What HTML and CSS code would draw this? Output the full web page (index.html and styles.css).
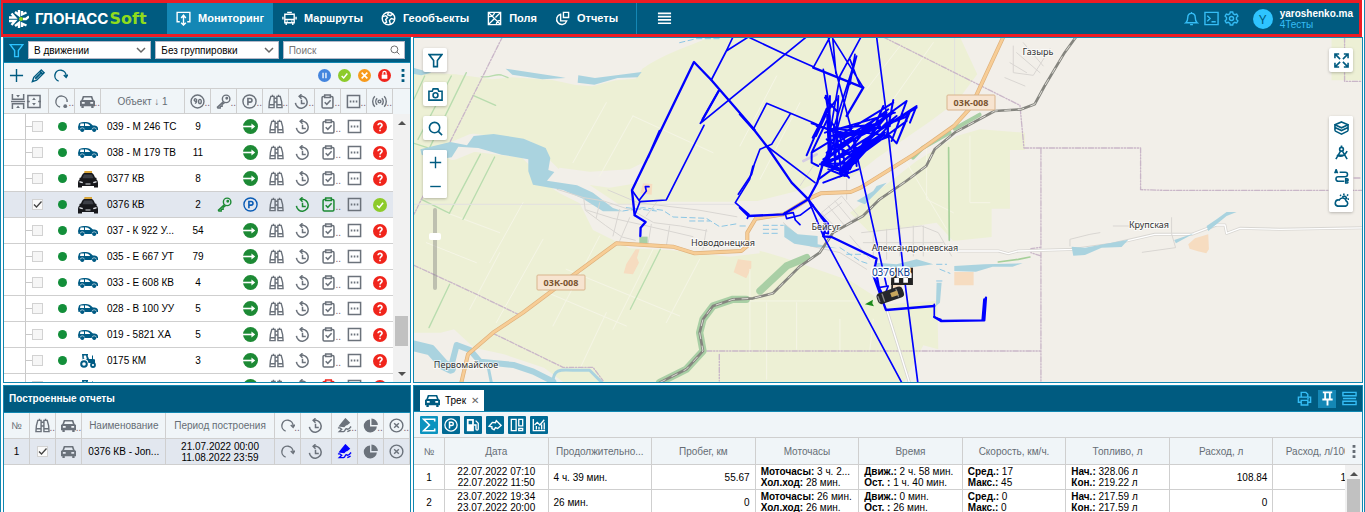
FILE: index.html
```html
<!DOCTYPE html>
<html lang="ru">
<head>
    <meta charset="UTF-8">
    <meta name="viewport" content="width=device-width, initial-scale=1.0">
    <title>ГЛОНАССSoft - Мониторинг</title>
    <link rel="stylesheet" href="styles.css">
</head>
<body>
    <svg class="sprite" aria-hidden="true">
        <symbol id="i-monitor" viewBox="0 0 16 16"><path d="M4 11.500H1.200v-10h13.600v10H12M8 4.500v9M5.500 7.500 8 4.500l2.500 3M5.500 12.500 8 15l2.500-2.500"/></symbol>
        <symbol id="i-bus" viewBox="0 0 16 16"><path d="M3 3.500h10v9H3zM5.500 1.500h5M3 9h10M1 6v3M15 6v3M4.500 13v2M11.500 13v2M5 11h1M10 11h1"/></symbol>
        <symbol id="i-globe" viewBox="0 0 16 16"><circle cx="8" cy="8" r="6.700"/><path d="M2 6l3-1 2 2-2 2 1 3-2 1M8 1.500 7 4l3 1 3-2M14 9l-3-1-2 2 1 4"/></symbol>
        <symbol id="i-field" viewBox="0 0 16 16"><path d="M1.500 1.500h13v13h-13zM2 2l12 12M14 2 9 7M2 14l6-6M2 6c3 0 5-1 6-4M10 14c0-2 2-4 4-4"/></symbol>
        <symbol id="i-report" viewBox="0 0 16 16"><path d="M9 1.500h5.500v5.500H9zM6 3.500a5.500 5.500 0 1 0 6.500 7H6z"/></symbol>
        <symbol id="i-menu" viewBox="0 0 16 16"><path stroke-width="1.700" d="M1 2.500h14M1 6h14M1 9.500h14M1 13h14"/></symbol>
        <symbol id="i-bell" viewBox="0 0 16 16"><path d="M2 12.500h12c-2-1.500-2-3-2-5.500 0-2.500-1.500-4.500-4-4.500S4 4.500 4 7c0 2.500 0 4-2 5.500zM6.500 14.500h3M8 1v1"/></symbol>
        <symbol id="i-term" viewBox="0 0 16 16"><path d="M1 1.500h14v13H1zM3.500 5l3 3-3 3M8 11.500h4.500"/></symbol>
        <symbol id="i-gear" viewBox="0 0 16 16"><circle cx="8" cy="8" r="2.200"/><path d="M6.700 1h2.600l.5 2 1.700.9 2-.7 1.300 2.300-1.500 1.500v2l1.500 1.500-1.300 2.300-2-.7-1.700.9-.5 2H6.700l-.5-2-1.700-.9-2 .7-1.300-2.300L2.700 9V7L1.200 5.500l1.300-2.300 2 .7L6.200 3z"/></symbol>
        <symbol id="i-funnel" viewBox="0 0 16 16"><path d="M1.200 1.700h13.600L10 8v6.500H6V8z"/></symbol>
        <symbol id="i-plus" viewBox="0 0 16 16"><path d="M8 1v14M1 8h14"/></symbol>
        <symbol id="i-minus" viewBox="0 0 16 16"><path d="M1.500 8h13"/></symbol>
        <symbol id="i-pencil" viewBox="0 0 16 16"><path d="M1.500 14.500 3 10 11 2l3 3-8 8z"/><path stroke-width="2" d="M9.500 3.500l3 3M4.500 11.500l6-6"/></symbol>
        <symbol id="i-refresh" viewBox="0 0 16 16"><path d="M6 14A6 6 0 1 1 14 8.500M11.500 7.500 14 10l1.800-2.800"/></symbol>
        <symbol id="i-expand" viewBox="0 0 32 16"><path stroke-width="1.600" d="M1.500 0v5.500h12V0M1.500 16v-5.500h12V16M0 8h15M18 1.500h13v13H18zM17 8h3M29 8h3"/><path fill="currentColor" stroke="none" d="M5.500 1h4l-2 2.700zM5.500 15h4l-2-2.700zM22.500 6.500h4l-2-2.700zM22.500 9.500h4l-2 2.700z"/></symbol>
        <symbol id="i-state" viewBox="0 0 16 16"><path d="M6.500 14A6 6 0 1 1 14 8.500"/><circle cx="12" cy="13" r="2" fill="currentColor" stroke="none"/></symbol>
        <symbol id="i-car" viewBox="0 0 16 16"><path fill="currentColor" stroke="none" fill-rule="evenodd" d="M3 2h10l1.500 4.500L16 7.500V13h-1.500v2H12v-2H4v2H1.500v-2H0V7.500l1.500-1zM4.300 3.600 3.300 6.500h9.400l-1-2.900zM2 8.500v2h3v-2zM11 8.500v2h3v-2z"/></symbol>
        <symbol id="i-speed" viewBox="0 0 16 16"><circle cx="8" cy="8" r="6.900"/><path d="M7 7a1.300 1.300 0 1 0-2 .5 1.300 1.300 0 0 0 2-.5v1.500L5.500 10.300M9.200 8a1.400 2.300 0 1 1 2.800 0 1.400 2.300 0 1 1-2.800 0"/></symbol>
        <symbol id="i-key" viewBox="0 0 16 16"><circle cx="10.800" cy="5.200" r="4"/><circle cx="11.500" cy="4.500" r=".8"/><path d="M8 8l-6.500 6 .5 1h2.500v-2h2v-2L9 9.500"/></symbol>
        <symbol id="i-park" viewBox="0 0 16 16"><circle cx="8" cy="8" r="7"/><path stroke-width="1.700" d="M6.300 12V4.800h2.400a1.900 1.900 0 0 1 0 3.900H6.300"/></symbol>
        <symbol id="i-go" viewBox="0 0 16 16"><circle cx="8" cy="8" r="8" fill="currentColor" stroke="none"/><path stroke="#fff" stroke-width="1.700" d="M0 8h11"/><path fill="#fff" stroke="none" d="M9 4.800 13 8l-4 3.200z"/></symbol>
        <symbol id="i-bino" viewBox="0 0 16 16"><path d="M3 2.500h3.500v12h-5.500L1.500 8zM13 2.500H9.500v12h5.500L14.500 8zM6.500 4.500h3M6.500 8.500h3M1.300 11.500h5M9.700 11.500h5M4 1.500h1.500M10.500 1.500H12"/></symbol>
        <symbol id="i-clock" viewBox="0 0 16 16"><path stroke-width="1.600" d="M1.500 9.500a6.300 6.300 0 1 0 6-7M5.500 2.500h4M8 .3 5.500 2.500 8 5M8 6v4h3.500"/></symbol>
        <symbol id="i-clip" viewBox="0 0 16 16"><path stroke-width="1.600" d="M5 2.700H3.500a1.300 1.300 0 0 0-1.300 1.300v9.700a1.300 1.300 0 0 0 1.300 1.300h9a1.300 1.300 0 0 0 1.300-1.300V4a1.300 1.300 0 0 0-1.300-1.300H11M5 1h6v2.800H5zM5 8.700 7.300 11l4-4.300"/></symbol>
        <symbol id="i-dots" viewBox="0 0 16 16"><path stroke-width="1.600" d="M1.500 1.500h13v13h-13z"/><path stroke-width="2" d="M4 8h1.700M7.200 8h1.700M10.400 8h1.700"/></symbol>
        <symbol id="i-signal" viewBox="0 0 16 16"><circle cx="8" cy="8" r="1.500"/><path d="M5.500 4.500c-2 2-2 5 0 7M10.500 4.500c2 2 2 5 0 7M3 2.500c-3 3-3 8 0 11M13 2.500c3 3 3 8 0 11"/></symbol>
        <symbol id="i-quest" viewBox="0 0 16 16"><circle cx="8" cy="8" r="8" fill="#f0251c" stroke="none"/><path stroke="#fff" stroke-width="1.900" d="M5.800 6c0-3 4.600-2.800 4.500 0 0 1.700-2.200 1.700-2.200 3.700M8 11.200v1.700"/></symbol>
        <symbol id="i-ok" viewBox="0 0 16 16"><circle cx="8" cy="8" r="8" fill="#8dcb2b" stroke="none"/><path stroke="#fff" stroke-width="1.800" d="M4.500 8.500 7 11l4.500-5.500"/></symbol>
        <symbol id="i-pause" viewBox="0 0 16 16"><circle cx="8" cy="8" r="8" fill="#4385de" stroke="none"/><path stroke="#fff" stroke-width="1.600" d="M6.200 4.500v7M9.800 4.500v7"/></symbol>
        <symbol id="i-tools" viewBox="0 0 16 16"><circle cx="8" cy="8" r="8" fill="#f79a1c" stroke="none"/><path stroke="#fff" stroke-width="1.900" d="M4.500 4.500l7 7M11.500 4.500l-7 7"/></symbol>
        <symbol id="i-lock" viewBox="0 0 16 16"><circle cx="8" cy="8" r="8" fill="#f0251c" stroke="none"/><path fill="#fff" stroke="none" d="M4.500 7h7v5h-7z"/><path stroke="#fff" d="M6 7V5a2 2 0 0 1 4 0v2"/></symbol>
        <symbol id="i-kebab" viewBox="0 0 4 16"><path fill="currentColor" stroke="none" d="M.5 1h3v3h-3zM.5 6.500h3v3h-3zM.5 12h3v3h-3z"/></symbol>
        <symbol id="i-search" viewBox="0 0 16 16"><circle cx="7" cy="7" r="5.500"/><path d="M11 11l4 4"/></symbol>
        <symbol id="i-camera" viewBox="0 0 16 16"><path d="M1 4.500h3.500L5.500 2h5l1 2.500H15v9.500H1z"/><circle cx="8" cy="8.800" r="2.600"/></symbol>
        <symbol id="i-full" viewBox="0 0 16 16"><path d="M1 5.500V1h4.500M1 1l5.500 5.500M10.500 1H15v4.500M15 1 9.500 6.500M1 10.500V15h4.500M1 15l5.500-5.500M15 10.500V15h-4.500M15 15 9.500 9.500"/></symbol>
        <symbol id="i-layers" viewBox="0 0 16 16"><path d="M8 1l7 3-7 3.200L1 4zM1 7l7 3.200L15 7M1 10.500 8 14l7-3.500M1 4v6.500M15 4v6.500"/></symbol>
        <symbol id="i-compass" viewBox="0 0 16 16"><circle cx="8" cy="4.500" r="2"/><path d="M8 .5v2M7 6.500 2 15M9 6.500l5 8.500M3 11c4 2 8 1 11-4.500M5 11h6"/></symbol>
        <symbol id="i-route" viewBox="0 0 16 16"><path d="M6 3.500h6a2.400 2.400 0 0 1 0 4.800H4.500a2.400 2.400 0 0 0 0 4.800H11M.8 4.500 2.300.7l1.500 3.800M1.300 3.300h2M12.500 10.500v4.500h1.500a1.200 1.200 0 0 0 0-2.300 1.100 1.100 0 0 0 0-2.200zM12.500 12.700h1.500"/></symbol>
        <symbol id="i-weather" viewBox="0 0 16 16"><path d="M4 14h8.500a3 3 0 0 0 .5-5.500 4 4 0 0 0-7.500-1A3.300 3.300 0 0 0 4 14zM9 4.500c1-2 4.500-1.500 4.500 2M10.500 2V.5M14 3l1-1.500M14.500 6.500H16M7.500 3l-1-1"/></symbol>
        <symbol id="i-pen" viewBox="0 0 16 16"><path fill="currentColor" d="M3 8.500 6 4.500l3 3-1.500 1.500zM7 3.500 9 1l4 4-2.500 2z"/><path d="M1 10.500h2l2 1.500-2.500 2.500H7c2.500-.5 1-3 3-3s1 2.500 5-2.500M11 14.500l3.500-1.500"/></symbol>
        <symbol id="i-pie" viewBox="0 0 16 16"><path fill="currentColor" stroke="none" d="M7.500 1.500a7 7 0 1 0 7.300 7.500H7.500zM9 .5V7.500h6.800A7 7 0 0 0 9 .5z"/></symbol>
        <symbol id="i-close" viewBox="0 0 16 16"><circle cx="8" cy="8" r="6.800"/><path d="M5.500 5.500l5 5M10.500 5.500l-5 5"/></symbol>
        <symbol id="i-sum" viewBox="0 0 16 16"><path stroke-width="1.800" d="M14.500 4V1.500H2L8.500 8 2 14.500h12.500V12"/></symbol>
        <symbol id="i-fuel" viewBox="0 0 16 16"><path fill="currentColor" fill-rule="evenodd" stroke="none" d="M1 1h8v14H1zM3 3v4h4V3z"/><path d="M11 3l3 3v6.500a1.300 1.300 0 0 1-2.600 0V8H9"/></symbol>
        <symbol id="i-zone" viewBox="0 0 16 16"><path stroke-width="1.600" d="M1.300 9.500 5 5l3.500.5L9.500 3l5.500 5.500-4 3.500-2.500-1L7 13.500 4.500 12v-2z"/></symbol>
        <symbol id="i-board" viewBox="0 0 16 16"><path d="M1.500 1.500H7v13H1.500zM10 1.500h4.500V9H10zM10 12h4.500v2.500H10z"/></symbol>
        <symbol id="i-chart" viewBox="0 0 16 16"><path d="M1.500 1v13.500H15M3 8l3-3 3 3 5-6M5 13V9M8 13v-3M11 13V7.500M14 13V5"/></symbol>
        <symbol id="i-print" viewBox="0 0 16 16"><path d="M4.500 6V1.500h5l2 2V6M4.500 12H1.500V6.500h13V12h-3M4.500 10h7v5h-7zM11 8.300h1.500"/></symbol>
        <symbol id="i-pin" viewBox="0 0 16 16"><path stroke-width="2" d="M3 1.500h10M5.500 2v6M10.500 2v6M2.500 9h11M8 9v6.500"/></symbol>
        <symbol id="i-rows" viewBox="0 0 16 16"><path d="M1 1.500h14v3.500H1zM1 8h14M1 11h14v3.500H1z"/></symbol>
        <symbol id="i-side" viewBox="0 0 20 10"><path fill="#005b84" d="M0 5 1 1.500C2 .3 5 0 8 0c2.500 0 4.500 1 6.500 3.200 3 .3 5.500 1 5.500 3V8h-1.500A2.500 2.500 0 0 1 14 8H6.500A2.500 2.500 0 0 1 2 8H.5z"/><circle cx="4.300" cy="8" r="1.900" fill="#005b84"/><circle cx="16.200" cy="8" r="1.900" fill="#005b84"/><path fill="#fff" d="M2.500 1.500H6V4H2zM7 1.300c2 0 3.500.7 5 2.300V4H7z"/><path stroke="#fff" stroke-width=".6" d="M2 7.500a2.400 2.400 0 0 1 4.600 0M13.900 7.500a2.400 2.400 0 0 1 4.600 0"/></symbol>
        <symbol id="i-taxi" viewBox="0 0 20 18"><path fill="#d9a63a" d="M6.500 1h7.500v2.500H6z"/><path fill="#17181c" d="M6 3h8c1.500.5 2.200 2.500 3 4.500 2 0 2 1.300 1 1.500 1.500 1 2 2.500 2 4.500v4h-4V16H4v1.500H0v-4C0 11.500.5 10 2 9c-1-.2-1-1.500 1-1.500.8-2 1.500-4 3-4.500z"/><path fill="#3c3f46" d="M6 4.500h8l1.500 3.700h-11z"/><path fill="#dfe2e6" d="M1.500 11l3.500 1-.5 1.200-3-.6zM18.500 11 15 12l.5 1.200 3-.6zM7.500 13.500h5v1h-5z"/></symbol>
        <symbol id="i-tractor" viewBox="0 0 16 14"><path fill="#005b84" fill-rule="evenodd" d="M2 0h6v1.500H7.500L9 5h3V1.500h1V5l2 .5V9H8.500A4.200 4.200 0 0 0 1 6.500L2.500 5zM3.800 1.500V5h3L6 1.500z"/><circle cx="4" cy="10" r="2.800" fill="none" stroke="#005b84" stroke-width="2"/><circle cx="13" cy="11" r="2" fill="none" stroke="#005b84" stroke-width="1.800"/></symbol>
    </svg>

    <header class="topbar">
        <div class="brand">
            <svg class="brand-mark" viewBox="0 0 20 20"><path fill="none" stroke="#fff" stroke-width="2.400" d="M10 1v5l-4-3M0 8.500h6L2.500 4.500M0 12h6l-3.500 4M10 19v-5l-4 3M13 2v3.500l4.500-2M13 18v-3.500l4.500 2M14 10h3l3-2.500"/><circle cx="12" cy="10" r="2" fill="#8fdc1c"/></svg>
            <span class="brand-name">ГЛОНАСС</span><span class="brand-soft">Soft</span>
        </div>
        <nav class="menu">
            <a href="#" class="active"><svg class="icon"><use href="#i-monitor"/></svg>Мониторинг</a>
            <a href="#"><svg class="icon"><use href="#i-bus"/></svg>Маршруты</a>
            <a href="#"><svg class="icon"><use href="#i-globe"/></svg>Геообъекты</a>
            <a href="#"><svg class="icon"><use href="#i-field"/></svg>Поля</a>
            <a href="#"><svg class="icon"><use href="#i-report"/></svg>Отчеты</a>
        </nav>
        <button class="burger" aria-label="Меню"><svg class="icon"><use href="#i-menu"/></svg></button>
        <div class="user">
            <button aria-label="Уведомления"><svg class="icon"><use href="#i-bell"/></svg></button>
            <button aria-label="Консоль"><svg class="icon"><use href="#i-term"/></svg></button>
            <button aria-label="Настройки"><svg class="icon"><use href="#i-gear"/></svg></button>
            <span class="avatar">Y</span>
            <div class="user-name"><b>yaroshenko.ma</b><span>4Тесты</span></div>
        </div>
    </header>

    <main class="workspace">
        <section class="panel objects">
            <div class="filters">
                <svg class="icon"><use href="#i-funnel"/></svg>
                <select aria-label="Состояние"><option>В движении</option></select>
                <select aria-label="Группировка"><option>Без группировки</option></select>
                <div class="search"><input type="text" placeholder="Поиск" aria-label="Поиск"><svg class="icon"><use href="#i-search"/></svg></div>
            </div>
            <div class="tools">
                <button aria-label="Добавить"><svg class="icon"><use href="#i-plus"/></svg></button>
                <button aria-label="Изменить"><svg class="icon"><use href="#i-pencil"/></svg></button>
                <button aria-label="Обновить"><svg class="icon"><use href="#i-refresh"/></svg></button>
                <span class="spacer"></span>
                <button aria-label="Пауза"><svg class="icon badge"><use href="#i-pause"/></svg></button>
                <button aria-label="Активные"><svg class="icon badge"><use href="#i-ok"/></svg></button>
                <button aria-label="Сервис"><svg class="icon badge"><use href="#i-tools"/></svg></button>
                <button aria-label="Блокировка"><svg class="icon badge"><use href="#i-lock"/></svg></button>
                <button class="kebab" aria-label="Ещё"><svg class="icon"><use href="#i-kebab"/></svg></button>
            </div>
            <div class="grid-wrap">
                <table class="objects-table">
                    <colgroup><col class="c-tree-line"><col class="c-tree"><col><col><col class="c-name"><col span="8"></colgroup>
                    <thead>
                        <tr>
                            <th colspan="2"><svg class="icon wide"><use href="#i-expand"/></svg></th>
                            <th class="cut"><svg class="icon"><use href="#i-state"/></svg></th>
                            <th class="cut"><svg class="icon"><use href="#i-car"/></svg></th>
                            <th>Объект ↓ 1</th>
                            <th class="cut"><svg class="icon"><use href="#i-speed"/></svg></th>
                            <th class="cut"><svg class="icon"><use href="#i-key"/></svg></th>
                            <th class="cut"><svg class="icon"><use href="#i-park"/></svg></th>
                            <th class="cut"><svg class="icon"><use href="#i-bino"/></svg></th>
                            <th class="cut"><svg class="icon"><use href="#i-clock"/></svg></th>
                            <th class="cut"><svg class="icon"><use href="#i-clip"/></svg></th>
                            <th class="cut"><svg class="icon"><use href="#i-dots"/></svg></th>
                            <th class="cut"><svg class="icon"><use href="#i-signal"/></svg></th>
                        </tr>
                    </thead>
                    <tbody id="objectRows"></tbody>
                </table>
                <div class="scrollbar"><i class="up"></i><i class="thumb"></i><i class="down"></i></div>
            </div>
        </section>

        <section class="panel map">
            <svg class="map-canvas" viewBox="0 0 948 344" preserveAspectRatio="xMidYMid slice">
                <rect width="948" height="344" fill="#edf0d5"/>
                <!-- drawn in 3x units, west part first -->
                <g transform="scale(.3333) translate(-3 -6)" fill="none" stroke-linejoin="round" stroke-linecap="round">
                    <g>
                        <path fill="#f2efe9" d="M3 3h890c-60 25-140 50-205 95l-20 30-60 5-70 18-50-4-70-15-120-8-60 6-110-15L3 108z"/>
                        <path stroke="#f2efe9" stroke-width="54" d="M120 345l60-25 160 20 60 60 40 40"/>
                        <path fill="#f2efe9" d="M400 440l40-45 90 12 120-7 40-20-10 60-90 15-60-8 90 60 120-10 300 0 0 155-90 10-180-20-120-5-110-55-40-80-60-30zM3 890l80 0 40-10 60 55 90 20 120 40 60 45H3z"/>
                        <path stroke="#f5f5e6" stroke-width="3" d="M480 380 580 200M560 420 660 240M600 880l120-240M420 870 560 600M250 860l140-250M330 500 230 680M100 530l160 60M40 620l150 60M460 700l340 140M660 240l240 110M760 860l100-190M500 1000l80-170M170 820 260 650M380 760l260 110"/>
                        <path stroke="#b8dcae" stroke-width="4" d="M3 190 35 120M15 310l100-190M50 335l110-225M180 178l68 30M3 322l40 13M110 530l92-175M150 550l95-187M25 490l85 42M48 875l62-130M205 122c30 5 40-10 60-5l20 8M652 820l90-180"/>
                        <path stroke="#c9b6c8" stroke-width="4" stroke-dasharray="14 5 4 5" d="M268 3 180 180 90 360 3 535M3 688l190 88 120 58M240 892l210 102h90l30 40"/>
                        <path stroke="#e2e0e0" stroke-width="3" d="M3 505h2850M1625 3v1035M2317 3v1035"/>
                        <path fill="#aad3df" d="M278 98l160 24 20 4-70 4-90-14zM496 118l50 8 140-18-12 16-60 2-70 20-50-6zM3 96l52 14-30 8-22-4zM22 340l90-22 50 10 20-28 60-6 90 14 66 28 14 30-6 36 18 6-22 26 90 14 48 22 60 46 30 10-60 0-60-38-60-26-90-16-14-40 0-36-80-14-70-20-60-4-20 32-50 8-40-16z"/>
                        <path stroke="#aad3df" stroke-width="32" d="M3 930l50 12 40 45 20 10"/>
                        <path stroke="#aad3df" stroke-width="18" d="M113 997l18-70 40 15 30 35 100 10 60 20 60 30"/>
                        <path stroke="#aad3df" stroke-width="9" d="M420 1040c0-40 20-40 60-37h50l40 40M225 990l10 50"/>
                        <path stroke="#8cc6e4" stroke-width="3" stroke-dasharray="16 10" d="M800 20 850 8 920 8M630 525l60-10 60 8 30 20 100 4 40 25 60-10M640 515l90 10M830 555h60"/>
                        <path stroke="#d9d6d2" stroke-width="3" d="M432 460l80 25 60 10 90 30 60 35 80 10 80 15M512 485l5 38 60 45 50 35 40 10M560 500l-10 45M620 520l-20 80M520 522l80 25 90 20 150 35M650 545l-30 70M715 565l-10 60M770 570l-10 60M585 462l90 38 180 22 160 28M880 580l-10 60M730 500l-30 40"/>
                        <path fill="#f6dcc0" d="M668 640l12 0-8 25 6 15-18 35-28-3 8-28zM975 670l40 5 0 20-15 32-38-18zM690 442l28 2-2 32-34-4z"/>
                        <path fill="#a9cfa5" d="M679 602h25v24h-25z"/>
                    </g>
                    <g transform="translate(981 0)">
                        <path fill="#f2efe9" d="M660 3h1210v1040H490l60-115 45 12-3-145-150 10-110-70-200-70-140-40 0-130 60 0 120-30 70-30 90-10 30-20 50-40 160-110 80-60 60-80z"/>
                        <path fill="#edf0d5" d="M530 375l120-75 70-20 135 10v52h-45v176h-55v85l-115 12-50-55-200 30-60-60zM1775 3h90v130h-90z"/>
                        <path stroke="#f5f5e6" stroke-width="3" d="M0 330 110 120M60 430 180 200M460 190 580 20M380 160 480 30M30 950V700M170 800v140M300 850v100M400 850l-10 90M80 800v230M0 795h500M560 330v160l80 40M690 300v200h60M500 380l120 200"/>
                        <path stroke="#a6d09a" stroke-width="5" d="M626 335l2 278M775 678l60-8 35-7"/>
                        <path stroke="#c9b6c8" stroke-width="4" stroke-dasharray="16 5 4 5 4 5" d="M430 3l410 205 12 128h350v125l70 2h594M903 338v700M0 945h900M903 660l-30-10v-12l30-4M1814 3v133h50M1860 426h-40M-100 945h100M-62 955v80"/>
                        <path stroke="#d9d6d2" stroke-width="3" d="M245 530l60-50 50 60-60 40zM265 510l50 60M285 495l50 60M225 560l80-60M365 590l180-20 50 20 40 70M370 620h240M400 580v90M440 580v90M480 570v90M520 570v90M550 570v90M180 450l40-60 40-10M320 490l0-60M330 600l60 70M130 560l80 70 90 20 80 50M820 30v80l60 8 50-80M830 50l70 60M850 20l60 70M795 125l60 25M810 80l50 30"/>
                        <path stroke="#d8d6d2" stroke-width="9" d="M655 645h120l30 8 30-8 170-5 110-15 130-30h110l75-28h25l5 25 40-15 120 3 270-5v118h50M440 820l70 225"/>
                        <path stroke="#fff" stroke-width="4" d="M655 645h120l30 8 30-8 170-5 110-15 130-30h110l75-28h25l5 25 40-15 120 3 270-5v118h50M440 820l70 225"/>
                        <path stroke="#d9d6d2" stroke-width="3" d="M990 630v-20l60-15 30-5M1120 570h70M1295 545v48l12 42-100 14"/>
                        <path fill="#aad3df" d="M133 565l40 30 60 5 0 25 60 12-70-4-60-10-30-20zM350 495l50-30 10-15 30-10-25 25-40 40zM410 680l60 5 60-15 50 15-60 8-60 15-50-10zM643 690l90-5 115-3-30 10-60 0-50 15-65-2zM995 632l40 3 55-10 75-14-20 22-60 2-50 22-35 2zM1303 612l60-20-55 30zM1400 570l30-20 30-22 30 0-30 12-55 45zM590 740l15 0-5 60-12 10z"/>
                        <path stroke="#8cc6e4" stroke-width="3" stroke-dasharray="16 10" d="M0 570h20M70 568h60M70 580h50M70 592h50M300 635l60 40 30 10M320 655h60M590 685h30M600 700l30 12M590 735h20"/>
                        <path fill="#f6dcc0" d="M643 708h58v40h-58zM1345 625l20-18 40-12 2 45-8 12-25-6-25-8zM455 740h30v30h-30z"/>
                        <path stroke="#d5cde2" stroke-width="8" d="M190 375l40-20"/>
                    </g>
                    <path stroke="#a9cfa5" stroke-width="22" d="M740 1040l80-40 50-55-10-55 10-40 30-40 60-20h40M1041 765l80-75 60-25"/>
                    <path stroke="#a9cfa5" stroke-width="12" d="M1500 365l30-30 80-45M1625 278l75-42"/>
                    <path stroke="#85857f" stroke-width="8" d="M740 1040l80-40 50-55-10-55 10-40 30-40 60-20 60-3 60-15 80-80 60-42 40-60 90-50 50-50 80-55 60-45 25-50 60-50 120-65 80-5 40-15 30-55 60-100 40-55"/>
                    <path stroke="#dedcd6" stroke-width="3" stroke-dasharray="20 20" stroke-linecap="butt" d="M740 1040l80-40 50-55-10-55 10-40 30-40 60-20 60-3 60-15 80-80 60-42 40-60 90-50 50-50 80-55 60-45 25-50 60-50 120-65 80-5 40-15 30-55 60-100 40-55"/>
                    <path stroke="#deb07a" stroke-width="12" d="M145 1040l20-85 75-65 90-60 100-75 180-133 170 10 65 20 140-7 18-15v-40l25-42 85-13 75-47 35-16 90-4 30-13 160-100 120-85 50-55L1771 3"/>
                    <path stroke="#f7cd96" stroke-width="8" d="M145 1040l20-85 75-65 90-60 100-75 180-133 170 10 65 20 140-7 18-15v-40l25-42 85-13 75-47 35-16 90-4 30-13 160-100 120-85 50-55L1771 3"/>
                    <!-- track -->
                    <g stroke="#0000ff" stroke-width="5">
                        <path d="M960 3l-20 42-45 87M940 45l66-42M862 262l55-97M873 268l-113 224-79 5-16 41M681 497l-24-34M708 452h-11l3 13-19 25M862 262 1180 3M1020 390l-10 40-43 70 41 35-5 12"/>
                        <path stroke-width="7" d="M895 132l-52-54-186 385 8 75 33 20-15 17-1 25M895 132l130 150M917 165l-48 85M740 285l-35 80"/>
                        <g transform="translate(981 0)">
                            <path d="M25 3l110 52 85 37M270 3l-50 92M265 3l25 112 40 150 110 485M278 3l10 110M410 3l25 197 55 500 44 343M280 10l90 145M250 100l18 110M362 5l-62 115-30 170M350 60l-85 320M345 55l-15 90M330 70l30 80M340 90l-60 190M40 280l40-78 140 58 80 38M150 235l-55 90-35 15-17 45-8 30-40 60M80 330l145 110M130 535l30-5 6 22 14 14M135 530l5 18 40-10 40-30M205 490l45 110 237 443M225 518l40 45v30l-20-5M415 755l30-5-8 20M583 805v38l20 8"/>
                            <path stroke-width="7" d="M220 95l150 60-50 85M0 235l45 50 35 45 75 110 50 50 55 75-10 36 25 2 135 65-10 50 38 104 145-12M583 843l20 12 130-2 5-68M728 850l5-60M205 490l27-50 18-60M205 490l-75 45-105 5-25-25M258 180l10 60 0 100M405 690l12 65 15 30"/>
                            <path stroke-width="6" d="M215 350l245-150M215 262l90 30M200 358l60-140M245 380l255-185M245 390l285-175M260 385l270-175-20 50M280 400l180-150M250 380l200-80M255 290l210-60M270 300l180-30M280 350l165-130M300 410l140-170M230 270l80 20M265 380l5-200M285 390l10-210M305 420l-15-130M320 420l25-90M240 385l110-5 20-60M250 440l105-40M235 430l110-80 90-60M275 260l80 110M350 390l-5-80M265 400l50 20M300 300l20 115M260 350l140-85M300 280l150 20 20 22 40-95M455 315l45-120M440 300l20-108M330 400l40-80 100-80M345 380l110-120 50-20M260 310l80 50 100-100M215 350l45-95M218 305l42-80M228 300l42-90M215 350v30l20 10M370 350l130-95 0-20M380 330l50-120M470 322l30-75M255 185l35 40M260 230l30-40M310 410l-10 12M310 405l17 20M280 290l5 90M270 280l140-15 50-35M300 330l120-60M290 320l150-90M250 370l170-110M330 340l60-75M290 370l130-70"/>
                            <path stroke-width="13" d="M265 240l5 100-15 45 55 20 35-30 25-35 60-45M285 300l80-10M310 395l40-40"/>
                        </g>
                    </g>
                    <path fill="#1c8a1c" d="M1356 805l24-14-2 11 5 9z"/>
                    <path stroke="#222" stroke-width="5" d="M1437 765l3-65"/>
                    <path fill="#222" d="M1436 695h64v52h-66z"/>
                    <path fill="#fff" d="M1444 726h14v14h-14zM1471 726h14v14h-14zM1458 712h13v14h-13zM1485 712h11v14h-11z"/>
                    <g transform="translate(1432 778) rotate(-19)"><rect x="-41" y="-17" width="82" height="34" rx="12" fill="#25272a"/><path stroke="#888" stroke-width="4" d="M-22-11v22M22-11v22M-36-8v16"/><path fill="#c8a75c" d="M2-7h22v14H2z"/></g>
                </g>
                <g class="shields"><rect x="123" y="237" width="48" height="15" rx="1"/><rect x="533" y="57" width="48" height="15" rx="1"/><text x="147" y="248">03К-008</text><text x="557" y="68">03К-008</text></g>
                <g class="places">
                    <text x="309" y="208">Новодонецкая</text>
                    <text x="412" y="192">Бейсуг</text>
                    <text x="501" y="213">Александроневская</text>
                    <text x="624" y="17">Газырь</text>
                    <text x="735" y="190">Крупская</text>
                    <text x="52" y="330">Первомайское</text>
                </g>
                <text class="unit" x="477" y="238">0376 КВ</text>
            </svg>
            <div class="map-left">
                <button aria-label="Фильтр"><svg class="icon"><use href="#i-funnel"/></svg></button>
                <button aria-label="Снимок"><svg class="icon"><use href="#i-camera"/></svg></button>
                <button aria-label="Найти"><svg class="icon"><use href="#i-search"/></svg></button>
                <div class="stack">
                    <button aria-label="Приблизить"><svg class="icon thin"><use href="#i-plus"/></svg></button>
                    <button aria-label="Отдалить"><svg class="icon thin"><use href="#i-minus"/></svg></button>
                </div>
                <input class="zoom" type="range" min="0" max="18" value="12" aria-label="Масштаб">
            </div>
            <div class="map-right">
                <button aria-label="На весь экран"><svg class="icon"><use href="#i-full"/></svg></button>
                <div class="stack">
                    <button aria-label="Слои"><svg class="icon"><use href="#i-layers"/></svg></button>
                    <button aria-label="Измерения"><svg class="icon"><use href="#i-compass"/></svg></button>
                    <button aria-label="Маршрут"><svg class="icon"><use href="#i-route"/></svg></button>
                    <button aria-label="Погода"><svg class="icon"><use href="#i-weather"/></svg></button>
                </div>
            </div>
        </section>

        <section class="panel reports">
            <h2>Построенные отчеты</h2>
            <table class="reports-table">
                <colgroup><col><col><col><col class="c-title"><col class="c-period"><col><col class="c-clock"><col><col><col></colgroup>
                <thead>
                    <tr>
                        <th>№</th>
                        <th class="cut"><svg class="icon"><use href="#i-bino"/></svg></th>
                        <th class="cut"><svg class="icon"><use href="#i-car"/></svg></th>
                        <th>Наименование</th>
                        <th>Период построения</th>
                        <th class="cut"><svg class="icon"><use href="#i-refresh"/></svg></th>
                        <th><svg class="icon"><use href="#i-clock"/></svg></th>
                        <th class="cut"><svg class="icon"><use href="#i-pen"/></svg></th>
                        <th class="cut"><svg class="icon"><use href="#i-pie"/></svg></th>
                        <th class="cut"><svg class="icon"><use href="#i-close"/></svg></th>
                    </tr>
                </thead>
                <tbody>
                    <tr>
                        <td>1</td>
                        <td><input type="checkbox" checked aria-label="Показать"></td>
                        <td><svg class="icon"><use href="#i-car"/></svg></td>
                        <td>0376 КВ - Jon...</td>
                        <td>21.07.2022 00:00<br>11.08.2022 23:59</td>
                        <td><svg class="icon"><use href="#i-refresh"/></svg></td>
                        <td><svg class="icon"><use href="#i-clock"/></svg></td>
                        <td><svg class="icon track"><use href="#i-pen"/></svg></td>
                        <td><svg class="icon"><use href="#i-pie"/></svg></td>
                        <td><svg class="icon"><use href="#i-close"/></svg></td>
                    </tr>
                </tbody>
            </table>
        </section>

        <section class="panel track-panel">
            <div class="tabs">
                <div class="tab"><svg class="icon"><use href="#i-car"/></svg>Трек<button aria-label="Закрыть">✕</button></div>
                <div class="tab-actions">
                    <button aria-label="Печать"><svg class="icon"><use href="#i-print"/></svg></button>
                    <button class="on" aria-label="Закрепить"><svg class="icon"><use href="#i-pin"/></svg></button>
                    <button aria-label="Вид"><svg class="icon"><use href="#i-rows"/></svg></button>
                </div>
            </div>
            <div class="modes">
                <button class="on" aria-label="Итоги"><svg class="icon"><use href="#i-sum"/></svg></button>
                <button aria-label="Стоянки"><svg class="icon"><use href="#i-park"/></svg></button>
                <button aria-label="Топливо"><svg class="icon"><use href="#i-fuel"/></svg></button>
                <button aria-label="Геозоны"><svg class="icon"><use href="#i-zone"/></svg></button>
                <button aria-label="Панель"><svg class="icon"><use href="#i-board"/></svg></button>
                <button aria-label="График"><svg class="icon"><use href="#i-chart"/></svg></button>
            </div>
            <div class="track-wrap">
                <div class="track-scroll">
                    <table class="track-table">
                        <colgroup><col class="c-num"><col span="9"></colgroup>
                        <thead>
                            <tr><th>№</th><th>Дата</th><th>Продолжительно...</th><th>Пробег, км</th><th>Моточасы</th><th>Время</th><th>Скорость, км/ч.</th><th>Топливо, л</th><th>Расход, л</th><th>Расход, л/100 км</th></tr>
                        </thead>
                        <tbody>
                            <tr>
                                <td class="mid">1</td>
                                <td class="mid">22.07.2022 07:10<br>22.07.2022 11:50</td>
                                <td>4 ч. 39 мин.</td>
                                <td class="num">55.67</td>
                                <td><b>Моточасы:</b> 3 ч. 2...<br><b>Хол.ход:</b> 28 мин.</td>
                                <td><b>Движ.:</b> 2 ч. 58 мин.<br><b>Ост. :</b> 1 ч. 40 мин.</td>
                                <td><b>Сред.:</b> 17<br><b>Макс.:</b> 45</td>
                                <td><b>Нач.:</b> 328.06 л<br><b>Кон.:</b> 219.22 л</td>
                                <td class="num">108.84</td>
                                <td class="num">195.51</td>
                            </tr>
                            <tr>
                                <td class="mid">2</td>
                                <td class="mid">23.07.2022 19:34<br>23.07.2022 20:00</td>
                                <td>26 мин.</td>
                                <td class="num">0</td>
                                <td><b>Моточасы:</b> 26 мин.<br><b>Хол.ход:</b> 26 мин.</td>
                                <td><b>Движ.:</b> 0 мин.<br><b>Ост. :</b> 26 мин.</td>
                                <td><b>Сред.:</b> 0<br><b>Макс.:</b> 0</td>
                                <td><b>Нач.:</b> 217.59 л<br><b>Кон.:</b> 217.59 л</td>
                                <td class="num">0</td>
                                <td class="num"></td>
                            </tr>
                        </tbody>
                    </table>
                </div>
                <div class="track-side">
                    <button class="kebab" aria-label="Столбцы"><svg class="icon"><use href="#i-kebab"/></svg></button>
                    <div class="scrollbar"><i class="up"></i><i class="thumb"></i></div>
                </div>
            </div>
        </section>
    </main>
    <div class="frame"></div>

    <script>
        const objects = [
            { name: '039 - М 246 ТС', speed: 9, type: 'side' },
            { name: '038 - М 179 ТВ', speed: 11, type: 'side' },
            { name: '0377 КВ', speed: 8, type: 'taxi' },
            { name: '0376 КВ', speed: 2, type: 'taxi', selected: true },
            { name: '037 - К 922 У...', speed: 54, type: 'side' },
            { name: '035 - Е 667 УТ', speed: 79, type: 'side' },
            { name: '033 - Е 608 КВ', speed: 4, type: 'side' },
            { name: '028 - В 100 УУ', speed: 5, type: 'side' },
            { name: '019 - 5821 ХА', speed: 5, type: 'side' },
            { name: '0175 КМ', speed: 3, type: 'tractor' },
            { name: '', speed: '', type: 'tractor', late: true }
        ];

        const icon = (id, cls = '') => `<svg class="icon ${cls}"><use href="#i-${id}"/></svg>`;

        document.getElementById('objectRows').innerHTML = objects.map((o) => `
            <tr class="${o.selected ? 'selected' : ''}">
                <td class="line"></td>
                <td class="tree"><input type="checkbox" aria-label="Выбрать ${o.name}" ${o.selected ? 'checked' : ''}></td>
                <td><i class="dot"></i></td>
                <td>${icon(o.type, o.type)}</td>
                <td class="name">${o.name}</td>
                <td>${o.speed}</td>
                <td>${o.selected ? icon('key', 'green') : ''}</td>
                <td>${o.selected ? icon('park', 'blue') : icon('go', 'green')}</td>
                <td>${icon('bino')}</td>
                <td>${icon('clock', o.selected ? 'green' : '')}</td>
                <td class="cut">${icon('clip', o.selected ? 'green' : o.late ? 'red' : '')}</td>
                <td>${icon('dots')}</td>
                <td>${icon(o.selected ? 'ok' : 'quest', 'state')}</td>
            </tr>`).join('');
    </script>
</body>
</html>
```

FILE: styles.css
```css
* {
    box-sizing: border-box;
}

body {
    margin: 0;
    height: 100vh;
    display: flex;
    flex-direction: column;
    overflow: hidden;
    position: relative;
    border: solid #1187b1;
    border-width: 0 1px;
    background: #fff;
    color: #000;
    font: 10px/11px "Liberation Sans", Arial, sans-serif;
}

button {
    padding: 0;
    border: 0;
    background: none;
    color: inherit;
    font: inherit;
    display: flex;
    align-items: center;
    justify-content: center;
    cursor: pointer;
}

.sprite {
    position: absolute;
    width: 0;
    height: 0;
}

.icon {
    width: 15px;
    height: 15px;
    flex: none;
    fill: none;
    stroke: currentColor;
    stroke-width: 1.5;
}

/* top bar */
.topbar {
    flex: none;
    height: 37px;
    padding: 3px 2px;
    margin: 0 2px;
    display: flex;
    align-items: center;
    background: #005b80;
    color: #fff;
}

.frame {
    position: absolute;
    top: 0;
    left: -1px;
    right: 2px;
    height: 37px;
    border: 3px solid #ed1c24;
    pointer-events: none;
}

.brand {
    width: 162px;
    padding-left: 4px;
    display: flex;
    align-items: center;
}

.brand-mark {
    width: 20px;
    height: 20px;
    margin-right: 6px;
}

.brand-name {
    font: 700 15px/20px Inter, sans-serif;
}

.brand-soft {
    margin-left: 1px;
    color: #8fdc1c;
    font: 700 16px/20px "DejaVu Sans", sans-serif;
}

.menu {
    align-self: stretch;
    display: flex;
}

.menu a {
    padding: 0 9px;
    display: flex;
    align-items: center;
    gap: 7px;
    color: #fff;
    font-size: 11px;
    font-weight: bold;
    text-decoration: none;
}

.menu a.active {
    background: #1487b5;
}

.burger {
    align-self: stretch;
    margin-left: 9px;
    padding-left: 20px;
    border-left: 1px solid #1487b5;
}

.user {
    margin-left: auto;
    padding-right: 7px;
    display: flex;
    align-items: center;
    gap: 5px;
    color: #35bdf5;
}

.avatar {
    width: 20px;
    height: 20px;
    margin: 0 2px 0 9px;
    border-radius: 50%;
    background: #2ec4ff;
    color: #005b80;
    font: 13px/20px "Noto Sans", sans-serif;
    text-align: center;
}

.user-name b,
.user-name span {
    display: block;
}

.user-name b {
    color: #fff;
}

/* workspace */
.workspace {
    flex: 1;
    min-height: 0;
    padding: 0 1px 0 2px;
    display: grid;
    grid-template-columns: 408px minmax(0, 1fr);
    grid-template-rows: minmax(0, 1fr) 127px;
    gap: 2px;
}

.panel {
    border: 1px solid #1187b1;
    min-width: 0;
    overflow: hidden;
}

.reports,
.track-panel {
    border-bottom: 0;
}

.filters {
    height: 25px;
    padding: 0 5px;
    display: flex;
    align-items: center;
    gap: 4px;
    background: #005b80;
    color: #2ec4ff;
    border-bottom: 1px solid #1187b1;
}

.filters select,
.search {
    flex: 1;
    min-width: 0;
    height: 18px;
    border: 1px solid #b5b8c8;
    background: #fff;
    border-radius: 0;
    font: inherit;
}

.filters select {
    appearance: none;
    padding: 0 5px;
    color: #000;
    background: #fff url("data:image/svg+xml,%3Csvg xmlns='http://www.w3.org/2000/svg' width='10' height='7'%3E%3Cpath d='M1 1l4 4 4-4' fill='none' stroke='%23666' stroke-width='1.5'/%3E%3C/svg%3E") no-repeat right 4px center;
}

.search {
    display: flex;
    align-items: center;
    padding: 0 4px 0 5px;
    color: #666;
}

.search input {
    flex: 1;
    min-width: 0;
    padding: 0;
    border: 0;
    outline: 0;
    background: none;
    font: inherit;
}

.search input::placeholder {
    color: #757575;
}

.search .icon {
    width: 10px;
    height: 10px;
}

.tools {
    height: 26px;
    padding: 0 5px;
    display: flex;
    align-items: center;
    gap: 7px;
    background: #f0f5f8;
    border-bottom: 1px solid #cfcfcf;
    color: #005b80;
}

.spacer {
    flex: 1;
}

.icon.badge {
    width: 13px;
    height: 13px;
}

.kebab .icon {
    width: 4px;
    height: 15px;
}

.tools .kebab {
    margin-left: 3px;
}

/* tables */
table {
    table-layout: fixed;
    border-collapse: separate;
    border-spacing: 0;
}

th,
td {
    padding: 0;
    text-align: center;
    white-space: nowrap;
    overflow: hidden;
    border-bottom: 1px solid #cfcfcf;
}

th {
    background: #f0f5f8;
    color: #666d75;
    font-weight: normal;
    border-right: 1px solid #cfcfcf;
}

td .icon,
th .icon {
    display: block;
    margin: 0 auto;
    color: #6b727b;
}

.cut {
    position: relative;
}

.cut::after {
    content: "..";
    position: absolute;
    right: 0;
    bottom: 5px;
    color: #7d6470;
}

input[type="checkbox"] {
    appearance: none;
    display: block;
    width: 11px;
    height: 11px;
    margin: 0 auto;
    border: 1px solid #d2d2d2;
    background: #f6f6f6;
}

input[type="checkbox"]:checked {
    background: #fafafa url("data:image/svg+xml,%3Csvg xmlns='http://www.w3.org/2000/svg' width='9' height='9'%3E%3Cpath d='M1 4.5l2.5 2.5L8.5 1.5' fill='none' stroke='%23444' stroke-width='1.3'/%3E%3C/svg%3E") no-repeat center;
}

.grid-wrap {
    display: flex;
    background: #f0f5f8;
}

.objects-table {
    flex: none;
    width: 389px;
}

.objects-table col {
    width: 26px;
}

.objects-table .c-tree-line {
    width: 22px;
}

.objects-table .c-tree {
    width: 23px;
}

.objects-table .c-name {
    width: 84px;
}

.objects-table th {
    height: 25px;
}

.objects-table td {
    height: 26px;
    background: #fff;
}

.objects-table .selected td {
    background: #e2e7ef;
}

.objects-table .line {
    border-right: 1px solid #c9c9c9;
}

.objects-table .tree {
    background-image: linear-gradient(#c9c9c9, #c9c9c9);
    background-repeat: no-repeat;
    background-size: 6px 1px;
    background-position: 0 12px;
}

.objects-table .name {
    padding-left: 6px;
    text-align: left;
}

.icon.wide {
    width: 30px;
}

.dot {
    display: block;
    width: 9px;
    height: 9px;
    margin: 0 auto;
    border-radius: 50%;
    background: #138f3a;
}

.icon.side {
    width: 20px;
    height: 10px;
    stroke: none;
}

.icon.taxi {
    width: 20px;
    height: 18px;
    stroke: none;
}

.icon.tractor {
    width: 16px;
    height: 14px;
    stroke: none;
}

.icon.state {
    width: 14px;
    height: 14px;
}

td .icon.green {
    color: #1d8a35;
}

td .icon.blue {
    color: #0b5cb5;
}

td .icon.red {
    color: #f0251c;
}

td .icon.track {
    color: #0000ff;
}

.scrollbar {
    flex: 1;
    display: flex;
    flex-direction: column;
    align-items: center;
    background: #f1f1f1;
}

.objects .scrollbar {
    margin-top: 25px;
    height: 268px;
}

.scrollbar .up,
.scrollbar .down {
    border: 4px solid transparent;
}

.scrollbar .up {
    margin-top: 3px;
    border-bottom-color: #505050;
}

.scrollbar .down {
    margin-bottom: 2px;
    border-top-color: #505050;
}

.scrollbar .thumb {
    width: 13px;
    height: 30px;
    background: #c1c1c1;
}

.objects .scrollbar .thumb {
    margin: auto 0 26px;
}

/* map */
.map {
    position: relative;
}

.map-canvas {
    display: block;
    width: 100%;
    height: 100%;
}

.places text {
    font: 9px "Noto Sans", sans-serif;
    text-anchor: middle;
    fill: #333;
    stroke: #fff;
    stroke-width: 2px;
    stroke-opacity: .7;
    paint-order: stroke;
}

.shields rect {
    fill: #f7e4d0;
    stroke: #d9b48c;
}

.shields text {
    font: bold 9px "Noto Sans", sans-serif;
    text-anchor: middle;
    fill: #7a5530;
}

.unit {
    font: 10px "Noto Sans", sans-serif;
    text-anchor: middle;
    fill: #0a3d8f;
    stroke: #fff;
    stroke-width: 3px;
    paint-order: stroke;
}

.map-left,
.map-right {
    position: absolute;
    top: 10px;
    display: flex;
    flex-direction: column;
    gap: 10px;
    color: #005b80;
}

.map-left {
    left: 9px;
}

.map-right {
    right: 9px;
    gap: 44px;
}

.map-left button,
.map-right button {
    width: 24px;
    height: 24px;
    border-radius: 2px;
    background: #fff;
    box-shadow: 0 1px 3px rgba(0, 0, 0, .25);
}

.stack {
    border-radius: 2px;
    background: #fff;
    box-shadow: 0 1px 3px rgba(0, 0, 0, .25);
}

.map .stack button {
    box-shadow: none;
}

.map .icon {
    stroke-width: 1.7;
}

.map .icon.thin {
    width: 13px;
    height: 13px;
}

.zoom {
    appearance: none;
    writing-mode: vertical-lr;
    direction: rtl;
    width: 12px;
    height: 82px;
    margin: 0 6px;
    background: none;
}

.zoom::-webkit-slider-runnable-track {
    width: 4px;
    border-radius: 2px;
    background: rgba(120, 120, 120, .4);
}

.zoom::-webkit-slider-thumb {
    appearance: none;
    width: 12px;
    height: 7px;
    margin-left: -4px;
    border-radius: 2px;
    background: #fff;
}

/* reports */
.reports h2 {
    margin: 0;
    height: 27px;
    padding-left: 5px;
    background: #005b80;
    border-bottom: 1px solid #1187b1;
    color: #fff;
    font-size: 10px;
    line-height: 26px;
}

.reports-table {
    width: 406px;
}

.reports-table col {
    width: 26px;
}

.reports-table .c-title {
    width: 84px;
}

.reports-table .c-period {
    width: 108px;
}

.reports-table .c-clock {
    width: 31px;
}

.reports-table th,
.reports-table td {
    height: 26px;
    border-right: 1px solid #cfcfcf;
}

.reports-table td {
    background: #e2e7ef;
}

/* track report */
.tabs {
    height: 26px;
    padding: 0 5px 0 6px;
    display: flex;
    align-items: flex-end;
    justify-content: space-between;
    background: #005b80;
    border-bottom: 1px solid #1187b1;
}

.tab {
    height: 21px;
    padding: 0 5px;
    display: flex;
    align-items: center;
    gap: 5px;
    background: #fff;
}

.tab .icon {
    color: #005b80;
}

.tab button {
    color: #666;
}

.tab-actions {
    align-self: center;
    display: flex;
    align-items: center;
    gap: 6px;
    color: #35bdf5;
}

.tab-actions .on {
    width: 18px;
    height: 18px;
    background: #1487b5;
    color: #fff;
}

.modes {
    height: 26px;
    padding: 0 6px;
    display: flex;
    align-items: center;
    gap: 4px;
    background: #f0f5f8;
    border-bottom: 1px solid #cfcfcf;
}

.modes button {
    width: 18px;
    height: 18px;
    border-radius: 1px;
    background: #006a94;
    color: #fff;
}

.modes .on {
    background: #0a93bf;
}

.modes .icon {
    width: 14px;
    height: 14px;
}

.track-wrap {
    display: flex;
}

.track-scroll {
    flex: 1;
    min-width: 0;
    overflow: hidden;
}

.track-table {
    width: 963px;
}

.track-table .c-num {
    width: 31px;
}

.track-table th {
    height: 27px;
}

.track-table td {
    height: 25px;
    padding: 0 5px;
    text-align: left;
    border-right: 1px solid #cfcfcf;
}

.track-table .mid {
    padding: 0;
    text-align: center;
}

.track-table .num {
    text-align: right;
}

.track-side {
    width: 17px;
    display: flex;
    flex-direction: column;
    background: #f1f1f1;
}

.track-side .kebab {
    height: 27px;
    background: #f0f5f8;
    border-bottom: 1px solid #cfcfcf;
    color: #666d75;
}

.track-side .thumb {
    height: 40px;
    margin-top: 3px;
}
```
